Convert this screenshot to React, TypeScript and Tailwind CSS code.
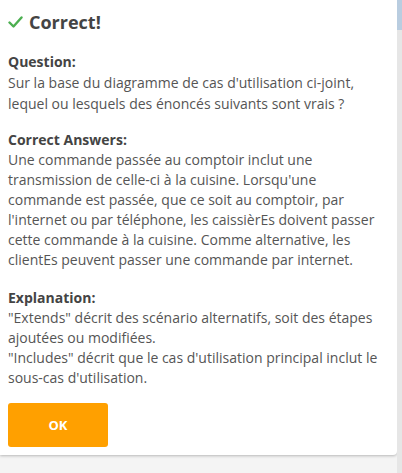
export default function App() {
  return (
    <div className="w-[402px] h-[473px] bg-[#f4f4f4] flex overflow-hidden font-['Open_Sans',sans-serif]">
      <div className="flex-1 h-[455px] bg-white rounded-br-[4px] shadow-[0_1px_3px_rgba(0,0,0,0.25)] px-2 pt-[10px] text-[#555] text-[14px] leading-[20px]">
        {/* Heading */}
        <div className="flex items-center gap-[6px] h-6">
          <svg width="15" height="12" viewBox="0 0 15 12" fill="none">
            <path d="M1.5 6.5l4 4L13.5 1.5" stroke="#4caf50" strokeWidth="2.4" strokeLinecap="round" strokeLinejoin="round" />
          </svg>
          <h2 className="text-[18px] font-bold text-[#444]">Correct!</h2>
        </div>

        <div className="mt-[18px]">
          <div className="font-bold text-[#444]">Question:</div>
          <p className="leading-[21px]">
            Sur la base du diagramme de cas d'utilisation ci-joint, lequel ou lesquels des énoncés suivants sont vrais ?
          </p>
        </div>

        <div className="mt-[16px]">
          <div className="font-bold text-[#444]">Correct Answers:</div>
          <p>
            Une commande passée au comptoir inclut une transmission de celle-ci à la cuisine. Lorsqu'une commande est passée, que ce soit au comptoir, par l'internet ou par téléphone, les caissièrEs doivent passer cette commande à la cuisine. Comme alternative, les clientEs peuvent passer une commande par internet.
          </p>
        </div>

        <div className="mt-[18px]">
          <div className="font-bold text-[#444]">Explanation:</div>
          <p>
            "Extends" décrit des scénario alternatifs, soit des étapes ajoutées ou modifiées.
            <br />
            "Includes" décrit que le cas d'utilisation principal inclut le sous-cas d'utilisation.
          </p>
        </div>

        <button className="mt-[15px] w-[100px] h-[44px] rounded-[3px] bg-[#ffa000] text-white text-[13px] font-bold">
          OK
        </button>
      </div>
      {/* page scrollbar strip */}
      <div className="w-[5px] flex flex-col">
        <div className="h-[30px] bg-[#b9cde0]" />
        <div className="flex-1 bg-[#e6e6e6]" />
      </div>
    </div>
  );
}
